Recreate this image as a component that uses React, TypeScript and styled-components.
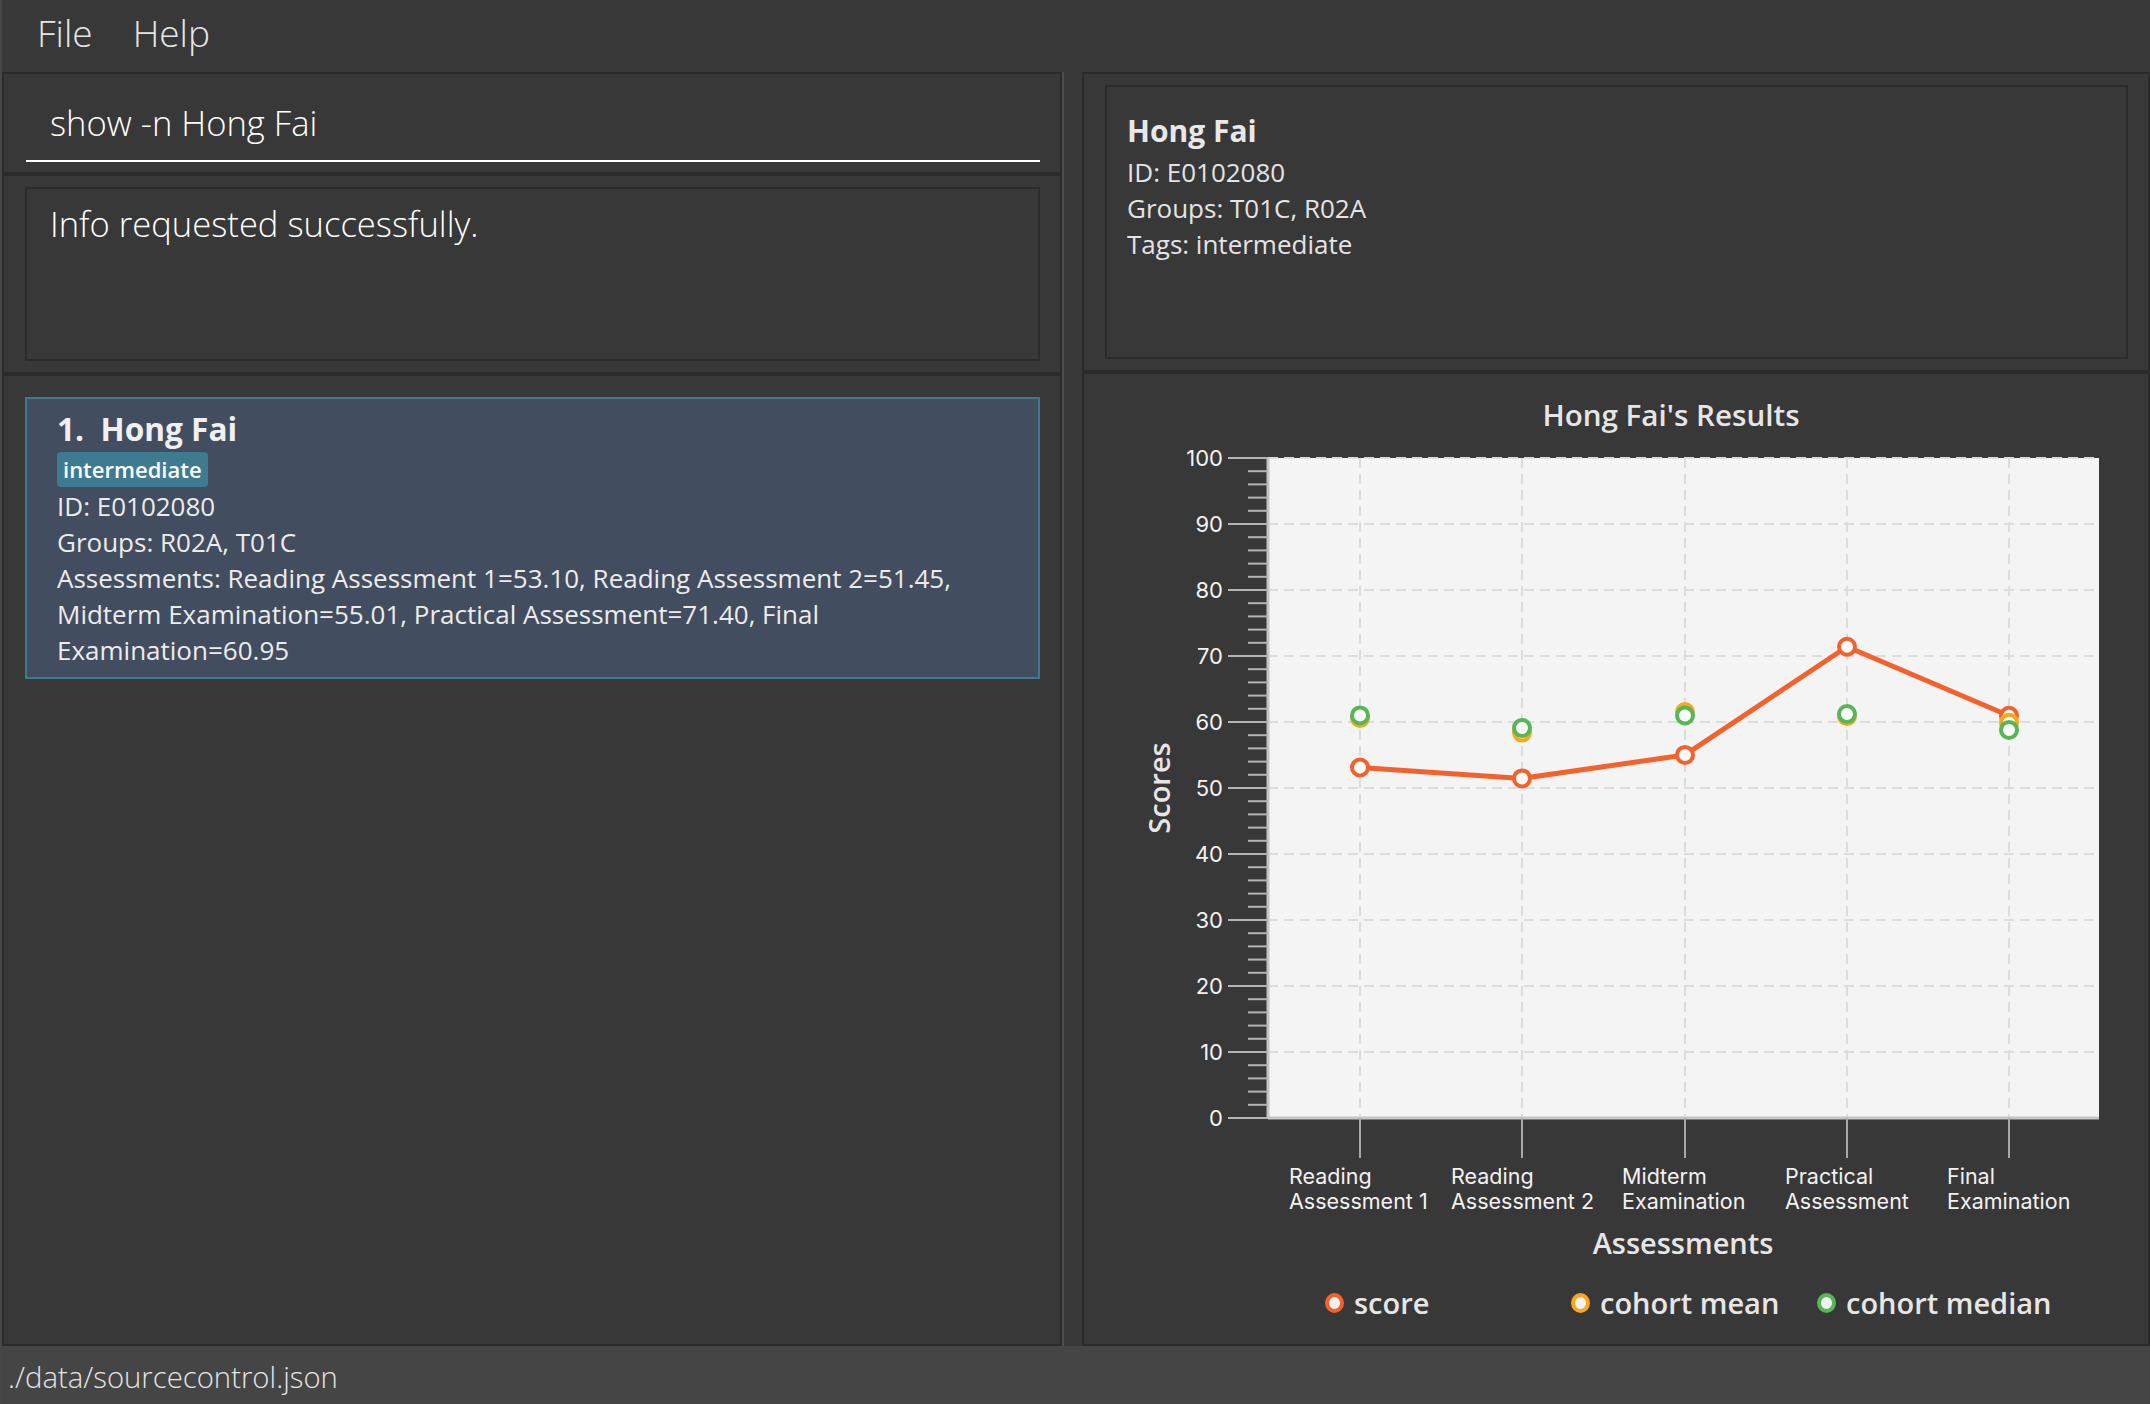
import React from 'react';
import styled, { createGlobalStyle } from 'styled-components';

const GlobalStyle = createGlobalStyle`
    html, body {
        margin: 0;
        padding: 0;
        background: #383838;
        overflow: hidden;
    }
    * {
        box-sizing: border-box;
    }
`;

const colors = {
    bg: '#383838',
    border: '#2b2b2b',
    text: '#ededed',
    score: '#f3622d',
    mean: '#fba71b',
    median: '#57b757',
};

const Page = styled.div`
    width: 2150px;
    height: 1404px;
    display: flex;
    flex-direction: column;
    background: ${colors.bg};
    border-left: 2px solid #474747;
    font-family: "Open Sans", "Liberation Sans", sans-serif;
    color: ${colors.text};
`;

const MenuBar = styled.div`
    height: 72px;
    display: flex;
    align-items: flex-start;
    gap: 40px;
    padding-left: 35px;
`;

const MenuItem = styled.span`
    font-size: 37px;
    font-weight: 300;
    line-height: 66px;
    color: #e6e6e6;
`;

const Body = styled.div`
    flex: 1;
    display: flex;
    min-height: 0;
`;

const LeftColumn = styled.div`
    width: 1060px;
    display: flex;
    flex-direction: column;
`;

const Divider = styled.div`
    width: 2px;
    background: #4d4d4d;
    margin-right: 18px;
`;

const RightColumn = styled.div`
    flex: 1;
    display: flex;
    flex-direction: column;
`;

const Pane = styled.div<{ $height?: number }>`
    ${p => (p.$height ? `height: ${p.$height}px;` : 'flex: 1; min-height: 0;')}
    border: 2px solid ${colors.border};
    display: flex;
    flex-direction: column;
`;

const CommandPane = styled(Pane)`
    padding: 10px 20px 10px 22px;
    justify-content: flex-end;
`;

const CommandInput = styled.div`
    padding: 19px 24px 17px;
    border-bottom: 2px solid #ffffff;
    font-size: 34.6px;
    font-weight: 300;
    line-height: 40px;
    color: #ffffff;
`;

const InsetPane = styled(Pane)`
    padding: 11px 20px 11px 21px;
`;

const InsetBox = styled.div`
    flex: 1;
    border: 2px solid ${colors.border};
`;

const ResultBox = styled(InsetBox)`
    padding: 13px 23px;
    font-size: 34.6px;
    font-weight: 300;
    line-height: 44px;
    color: #ffffff;
`;

const ListPane = styled(Pane)`
    padding: 21px 20px 0 21px;
`;

const Card = styled.div`
    background: #424d5f;
    border: 2px solid #3e7b91;
    padding: 10px 30px 9px;
`;

const CardTitle = styled.div`
    font-size: 31.6px;
    font-weight: 700;
    line-height: 40px;
    color: #f0f0f0;
    white-space: pre;
`;

const Tag = styled.span`
    display: inline-block;
    margin: 3px 0 1px;
    padding: 2px 6px;
    background: #3e7b91;
    border-radius: 4px;
    font-size: 22px;
    font-weight: 600;
    line-height: 31px;
    color: #ffffff;
`;

const CardLine = styled.div`
    font-size: 26px;
    line-height: 36px;
    color: #ececec;
`;

const DetailsBox = styled(InsetBox)`
    padding: 24px 20px;
`;

const DetailsName = styled.div`
    font-size: 30px;
    font-weight: 700;
    line-height: 40px;
    color: #e8e8e8;
    margin-bottom: 3px;
`;

const DetailsLine = styled.div`
    font-size: 26px;
    line-height: 36px;
    color: #e4e4e4;
`;

const ChartPane = styled(Pane)`
    padding-top: 21px;
`;

const ChartTitle = styled.div`
    padding-left: 110px;
    text-align: center;
    font-size: 29.6px;
    font-weight: 600;
    line-height: 40px;
    color: #e6e6e6;
`;

const ChartSvg = styled.svg`
    display: block;
    flex: none;
`;

const AxisTitle = styled.div`
    padding-left: 134px;
    text-align: center;
    font-size: 29px;
    font-weight: 600;
    line-height: 38px;
    color: #e6e6e6;
`;

const Legend = styled.div`
    margin-top: 22px;
    padding-left: 241px;
    display: grid;
    grid-template-columns: repeat(3, 246px);
`;

const LegendItem = styled.div`
    display: flex;
    align-items: center;
    gap: 10px;
    font-size: 29px;
    font-weight: 600;
    line-height: 38px;
    color: #e6e6e6;
`;

const LegendSymbol = styled.span<{ $color: string }>`
    width: 19px;
    height: 20px;
    border-radius: 50%;
    border: 4px solid ${p => p.$color};
    background: #f2f2f2;
`;

const StatusBar = styled.div`
    height: 58px;
    background: #454545;
    padding: 5px 0 0 6px;
    font-size: 29.3px;
    font-weight: 300;
    line-height: 53px;
    color: #e4e4e4;
`;

// chart geometry, local to the chart pane
const PLOT = { left: 184, right: 1015, top: 23, bottom: 683 };
const yOf = (v: number) => PLOT.bottom - (v / 100) * (PLOT.bottom - PLOT.top);

const categories = [
    { x: 276, lx: 205, lines: ['Reading', 'Assessment 1'] },
    { x: 438, lx: 367, lines: ['Reading', 'Assessment 2'] },
    { x: 601, lx: 538, lines: ['Midterm', 'Examination'] },
    { x: 763, lx: 701, lines: ['Practical', 'Assessment'] },
    { x: 925, lx: 863, lines: ['Final', 'Examination'] },
];

const series = [
    { name: 'score', color: colors.score, values: [53.1, 51.45, 55.01, 71.4, 60.95], line: true },
    { name: 'cohort mean', color: colors.mean, values: [60.6, 58.4, 61.5, 60.9, 59.9], line: false },
    { name: 'cohort median', color: colors.median, values: [61.0, 59.1, 61.0, 61.2, 58.8], line: false },
];

const tickFont = "Inter, 'Liberation Sans', sans-serif";

const ResultsChart = () => {
    const majors = Array.from({ length: 11 }, (_, i) => i * 10);
    const minors = Array.from({ length: 51 }, (_, i) => i * 2).filter(v => v % 10 !== 0);

    return (
        <ChartSvg width={1064} height={789} viewBox="0 0 1064 789">
            <rect
                x={PLOT.left}
                y={PLOT.top}
                width={PLOT.right - PLOT.left}
                height={PLOT.bottom - PLOT.top}
                fill="#f4f4f4"
            />
            {majors.map(v => (
                <line
                    key={`h${v}`}
                    x1={PLOT.left}
                    x2={PLOT.right}
                    y1={yOf(v)}
                    y2={yOf(v)}
                    stroke="#dcdcdc"
                    strokeWidth={2}
                    strokeDasharray="10 6"
                />
            ))}
            {categories.map(c => (
                <line
                    key={`v${c.x}`}
                    x1={c.x}
                    x2={c.x}
                    y1={PLOT.top}
                    y2={PLOT.bottom}
                    stroke="#dcdcdc"
                    strokeWidth={2}
                    strokeDasharray="10 6"
                />
            ))}
            <line x1={PLOT.left} x2={PLOT.left} y1={PLOT.top} y2={PLOT.bottom + 1} stroke="#c4c4c4" strokeWidth={3} />
            <line x1={PLOT.left} x2={PLOT.right} y1={PLOT.bottom} y2={PLOT.bottom} stroke="#c4c4c4" strokeWidth={3} />

            {majors.map(v => (
                <g key={`t${v}`}>
                    <line x1={144} x2={PLOT.left} y1={yOf(v)} y2={yOf(v)} stroke="#b4b4b4" strokeWidth={2} />
                    <text
                        x={139}
                        y={yOf(v)}
                        textAnchor="end"
                        dominantBaseline="central"
                        fontFamily={tickFont}
                        fontSize={22}
                        fill="#f2f2f2"
                    >
                        {v}
                    </text>
                </g>
            ))}
            {minors.map(v => (
                <line key={`m${v}`} x1={164} x2={PLOT.left} y1={yOf(v)} y2={yOf(v)} stroke="#b4b4b4" strokeWidth={2} />
            ))}

            {categories.map(c => (
                <g key={`c${c.x}`}>
                    <line x1={c.x} x2={c.x} y1={PLOT.bottom} y2={PLOT.bottom + 40} stroke="#a8a8a8" strokeWidth={2} />
                    {c.lines.map((l, i) => (
                        <text
                            key={l}
                            x={c.lx}
                            y={749 + i * 25}
                            fontFamily={tickFont}
                            fontSize={21.5}
                            fill="#f2f2f2"
                        >
                            {l}
                        </text>
                    ))}
                </g>
            ))}

            <text
                transform="translate(74 353) rotate(-90)"
                textAnchor="middle"
                dominantBaseline="central"
                fontFamily="'Open Sans', sans-serif"
                fontWeight={600}
                fontSize={29}
                fill="#e6e6e6"
            >
                Scores
            </text>

            {series.filter(s => s.line).map(s => (
                <polyline
                    key={`l${s.name}`}
                    points={s.values.map((v, i) => `${categories[i].x},${yOf(v)}`).join(' ')}
                    fill="none"
                    stroke={s.color}
                    strokeWidth={5}
                    strokeLinejoin="round"
                />
            ))}
            {series.map(s =>
                s.values.map((v, i) => (
                    <circle
                        key={`${s.name}${i}`}
                        cx={categories[i].x}
                        cy={yOf(v)}
                        r={8}
                        fill="#ffffff"
                        stroke={s.color}
                        strokeWidth={4}
                    />
                ))
            )}
        </ChartSvg>
    );
};

export default function App() {
    return (
        <>
            <GlobalStyle />
            <Page>
                <MenuBar>
                    <MenuItem>File</MenuItem>
                    <MenuItem>Help</MenuItem>
                </MenuBar>
                <Body>
                    <LeftColumn>
                        <CommandPane $height={102}>
                            <CommandInput>show -n Hong Fai</CommandInput>
                        </CommandPane>
                        <InsetPane $height={200}>
                            <ResultBox>Info requested successfully.</ResultBox>
                        </InsetPane>
                        <ListPane>
                            <Card>
                                <CardTitle>1.  Hong Fai</CardTitle>
                                <Tag>intermediate</Tag>
                                <CardLine>ID: E0102080</CardLine>
                                <CardLine>Groups: R02A, T01C</CardLine>
                                <CardLine>
                                    Assessments: Reading Assessment 1=53.10, Reading Assessment 2=51.45, Midterm
                                    Examination=55.01, Practical Assessment=71.40, Final Examination=60.95
                                </CardLine>
                            </Card>
                        </ListPane>
                    </LeftColumn>
                    <Divider />
                    <RightColumn>
                        <InsetPane $height={300}>
                            <DetailsBox>
                                <DetailsName>Hong Fai</DetailsName>
                                <DetailsLine>ID: E0102080</DetailsLine>
                                <DetailsLine>Groups: T01C, R02A</DetailsLine>
                                <DetailsLine>Tags: intermediate</DetailsLine>
                            </DetailsBox>
                        </InsetPane>
                        <ChartPane>
                            <ChartTitle>Hong Fai's Results</ChartTitle>
                            <ResultsChart />
                            <AxisTitle>Assessments</AxisTitle>
                            <Legend>
                                {series.map(s => (
                                    <LegendItem key={s.name}>
                                        <LegendSymbol $color={s.color} />
                                        {s.name}
                                    </LegendItem>
                                ))}
                            </Legend>
                        </ChartPane>
                    </RightColumn>
                </Body>
                <StatusBar>./data/sourcecontrol.json</StatusBar>
            </Page>
        </>
    );
}
